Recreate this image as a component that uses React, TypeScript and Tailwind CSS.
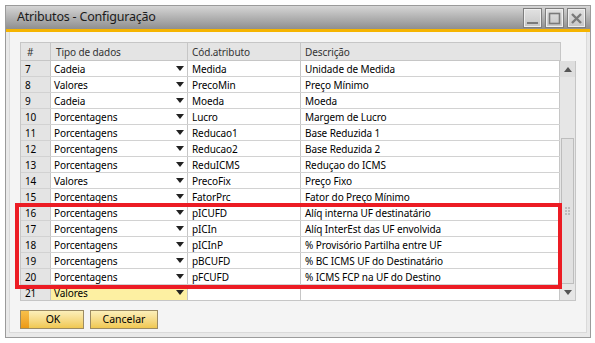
import React from "react";

interface Row {
    n: number;
    tipo: string;
    cod: string;
    desc: string;
}

const rows: Row[] = [
    { n: 7, tipo: "Cadeia", cod: "Medida", desc: "Unidade de Medida" },
    { n: 8, tipo: "Valores", cod: "PrecoMin", desc: "Preço Mínimo" },
    { n: 9, tipo: "Cadeia", cod: "Moeda", desc: "Moeda" },
    { n: 10, tipo: "Porcentagens", cod: "Lucro", desc: "Margem de Lucro" },
    { n: 11, tipo: "Porcentagens", cod: "Reducao1", desc: "Base Reduzida 1" },
    { n: 12, tipo: "Porcentagens", cod: "Reducao2", desc: "Base Reduzida 2" },
    { n: 13, tipo: "Porcentagens", cod: "ReduICMS", desc: "Reduçao do ICMS" },
    { n: 14, tipo: "Valores", cod: "PrecoFix", desc: "Preço Fixo" },
    { n: 15, tipo: "Porcentagens", cod: "FatorPrc", desc: "Fator do Preço Mínimo" },
    { n: 16, tipo: "Porcentagens", cod: "pICUFD", desc: "Alíq interna UF destinatário" },
    { n: 17, tipo: "Porcentagens", cod: "pICIn", desc: "Alíq InterEst das UF envolvida" },
    { n: 18, tipo: "Porcentagens", cod: "pICInP", desc: "% Provisório Partilha entre UF" },
    { n: 19, tipo: "Porcentagens", cod: "pBCUFD", desc: "% BC ICMS UF do Destinatário" },
    { n: 20, tipo: "Porcentagens", cod: "pFCUFD", desc: "% ICMS FCP na UF do Destino" },
];

const cols = "grid grid-cols-[30px_137px_113px_259px]";

function Arrow() {
    return (
        <svg width="8" height="5" viewBox="0 0 8 5" className="shrink-0">
            <path d="M0 0 H8 L4 5 Z" fill="#222" />
        </svg>
    );
}

function TitleButton({ kind }: { kind: "min" | "max" | "close" }) {
    return (
        <div className="w-[19px] h-[20px] border border-[#7e7e7e] bg-gradient-to-b from-[#e2e2e2] to-[#c6c6c6] flex items-center justify-center shadow-[inset_0_0_0_1px_#efefef]">
            <svg width="13" height="13" viewBox="0 0 13 13">
                {kind === "min" && <rect x="1" y="10" width="11" height="2" fill="#7a7a7a" />}
                {kind === "max" && (
                    <rect x="1.5" y="1.5" width="10" height="10" fill="none" stroke="#7a7a7a" strokeWidth="1.6" />
                )}
                {kind === "close" && (
                    <path d="M2 2 L11 11 M11 2 L2 11" stroke="#7a7a7a" strokeWidth="2.4" />
                )}
            </svg>
        </div>
    );
}

export default function App() {
    return (
        <div
            className="relative w-[595px] h-[343px] bg-white overflow-hidden pl-[5px] pt-[5px]"
            style={{ fontFamily: '"Noto Sans", "Open Sans", sans-serif' }}
        >
            <div className="w-[586px] h-[333px] border border-[#9b9b9b] bg-[#e9e9e9] flex flex-col">
                {/* title bar */}
                <div className="h-[23px] bg-gradient-to-b from-[#d6d6d6] to-[#8f8f8f] flex items-center justify-between pl-[11px] pr-[4px]">
                    <span className="text-[12.5px] tracking-[-0.2px] text-[#1b1b1b] leading-none">Atributos - Configuração</span>
                    <div className="flex gap-[3px] pt-[1px]">
                        <TitleButton kind="min" />
                        <TitleButton kind="max" />
                        <TitleButton kind="close" />
                    </div>
                </div>
                <div className="h-[3px] bg-[#f5b400]" />

                <div className="flex-1 px-[3px] pb-[4px]">
                    <div className="h-full bg-[#f4f4f4] border-x border-b border-[#dadada] pl-[10px] pt-[10px]">
                        {/* grid */}
                        <div className="text-[10px] tracking-[-0.1px] text-black leading-none">
                            <div className="flex">
                                <div className={`${cols} h-[19px] bg-[#e4e4e4] border border-[#c6c6c6] text-[#333]`}>
                                    <div className="pl-[6px] flex items-center border-r border-[#c6c6c6]">#</div>
                                    <div className="pl-[5px] flex items-center border-r border-[#c6c6c6]">Tipo de dados</div>
                                    <div className="pl-[4px] flex items-center border-r border-[#c6c6c6]">Cód.atributo</div>
                                    <div className="pl-[4px] flex items-center">Descrição</div>
                                </div>
                            </div>
                            <div className="flex">
                                <div className="border-l border-[#c6c6c6]">
                                    {rows.map((r) => (
                                        <div key={r.n} className={`${cols} h-[16px] border-b border-[#d2d2d2]`}>
                                            <div className="bg-[#e4e4e4] pl-[4px] flex items-center border-r border-[#c6c6c6]">{r.n}</div>
                                            <div className="bg-white pl-[3px] pr-[3px] flex items-center justify-between border-r border-[#c6c6c6]">
                                                <span>{r.tipo}</span>
                                                <Arrow />
                                            </div>
                                            <div className="bg-white pl-[4px] flex items-center border-r border-[#c6c6c6]">{r.cod}</div>
                                            <div className="bg-white pl-[4px] flex items-center border-r border-[#c6c6c6]">{r.desc}</div>
                                        </div>
                                    ))}
                                    <div className={`${cols} h-[16px] border-b border-[#c6c6c6]`}>
                                        <div className="bg-[#e4e4e4] pl-[4px] flex items-center border-r border-[#c6c6c6]">21</div>
                                        <div className="bg-[#fdf0a2] pl-[3px] pr-[3px] flex items-center justify-between border-r border-[#c6c6c6]">
                                            <span>Valores</span>
                                            <Arrow />
                                        </div>
                                        <div className="bg-white border-r border-[#c6c6c6]" />
                                        <div className="bg-white border-r border-[#c6c6c6]" />
                                    </div>
                                </div>
                                {/* scrollbar */}
                                <div className="w-[16px] h-[240px] bg-[#e6e6e6] border-r border-b border-[#c6c6c6] flex flex-col">
                                    <div className="h-[16px] flex items-center justify-center bg-[#dedede]">
                                        <svg width="8" height="5" viewBox="0 0 8 5">
                                            <path d="M0 5 H8 L4 0 Z" fill="#555" />
                                        </svg>
                                    </div>
                                    <div className="h-[61px]" />
                                    <div className="h-[146px] mx-[1px] bg-[#e1e1e1] border border-[#bdbdbd] flex items-center justify-center">
                                        <div className="grid grid-cols-2 gap-[1px]">
                                            {[0, 1, 2, 3, 4, 5].map((i) => (
                                                <div key={i} className="w-[2px] h-[2px] bg-[#bcbcbc]" />
                                            ))}
                                        </div>
                                    </div>
                                    <div className="flex-1 flex items-center justify-center">
                                        <svg width="8" height="5" viewBox="0 0 8 5">
                                            <path d="M0 0 H8 L4 5 Z" fill="#555" />
                                        </svg>
                                    </div>
                                </div>
                            </div>
                        </div>

                        {/* buttons */}
                        <div className="flex gap-[6px] mt-[9px] text-[10.5px]">
                            <button className="w-[64px] h-[19px] border border-[#9c8b63] bg-gradient-to-b from-[#fcefb9] to-[#f0c850] flex items-stretch">
                                <span className="w-[8px] bg-gradient-to-b from-[#f7c04a] to-[#ec9a12]" />
                                <span className="flex-1 flex items-center justify-center pr-[6px]">OK</span>
                            </button>
                            <button className="w-[68px] h-[19px] border border-[#9c8b63] bg-gradient-to-b from-[#fcefb9] to-[#f0c850] flex items-center justify-center">
                                Cancelar
                            </button>
                        </div>
                    </div>
                </div>
            </div>

            {/* red highlight annotation */}
            <div className="absolute left-[15px] top-[203px] w-[547px] h-[86px] border-[4px] border-[#ec1c24]" />
        </div>
    );
}
